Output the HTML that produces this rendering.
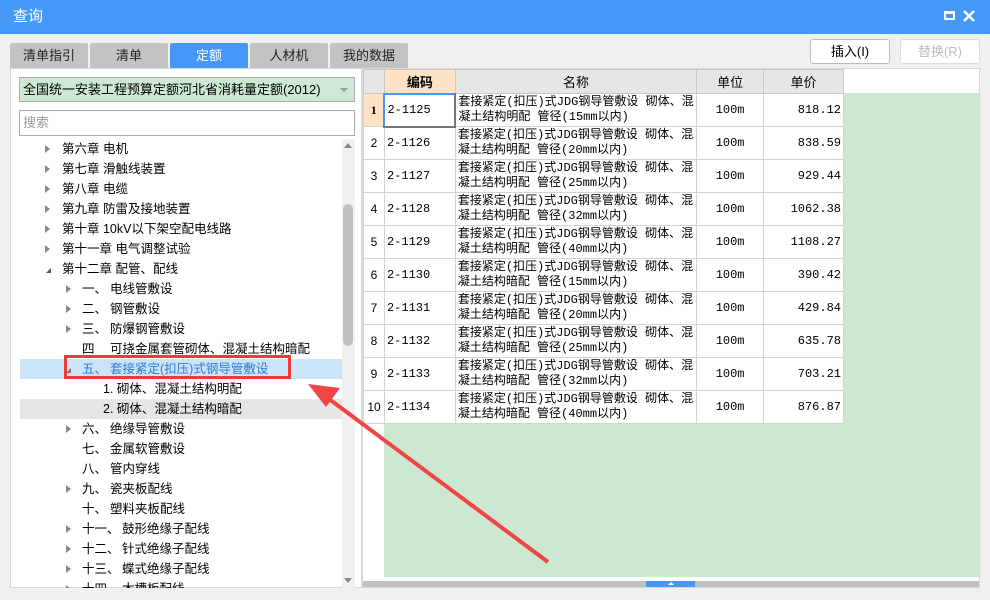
<!DOCTYPE html>
<html><head><meta charset="utf-8"><style>
*{margin:0;padding:0;box-sizing:border-box}
body{width:990px;height:600px;overflow:hidden;background:#f0f0f0;font-family:"Liberation Sans","Noto Sans CJK SC",sans-serif;font-size:12px;color:#000;position:relative}
.a{position:absolute}
.title{left:0;top:0;width:990px;height:34px;background:#4598f8;color:#fff;font-size:15px;line-height:34px;padding-left:13px}
.tab{top:43px;height:26px;background:#c3c3c3;border-radius:2px 2px 0 0;text-align:center;line-height:26px;font-size:13px;color:#222}
.btn{top:39px;height:25px;border:1px solid #bbb;border-radius:3px;background:#fff;text-align:center;line-height:23px;font-size:13px}
.tr{left:20px;width:322px;height:20px;line-height:20px;font-size:12.5px;white-space:nowrap}
.tri{position:absolute;width:0;height:0;border-top:4px solid transparent;border-bottom:4px solid transparent;border-left:5px solid #888;top:6px}
table{border-collapse:collapse;font-family:"Liberation Mono","Noto Sans CJK SC",monospace;font-size:12px}
td{border:1px solid #d4d4d4;height:33px;padding:0 2px;background:#fff;line-height:15px}
th{border:1px solid #c8c8c8;height:24px;background:#e6e6e6;font-weight:normal;font-family:"Liberation Sans","Noto Sans CJK SC",sans-serif;font-size:13px}
td.n{text-align:center;background:#fff;width:21px;font-family:"Liberation Sans",sans-serif}
td.u{text-align:center}
td.p{text-align:right}
</style></head><body>
<div class="a title">查询</div>
<div class="a" style="left:944px;top:11px;width:11px;height:9px;border:2px solid #fff;border-top-width:3px"></div>
<svg class="a" style="left:963px;top:10px" width="12" height="12"><path d="M1 1L11 11M11 1L1 11" stroke="#fff" stroke-width="2.4"/></svg>

<div class="a tab" style="left:10px;width:78px">清单指引</div>
<div class="a tab" style="left:90px;width:78px">清单</div>
<div class="a tab" style="left:170px;width:78px;background:#4598f8;color:#fff">定额</div>
<div class="a tab" style="left:250px;width:78px">人材机</div>
<div class="a tab" style="left:330px;width:78px">我的数据</div>
<div class="a btn" style="left:810px;width:80px">插入(I)</div>
<div class="a btn" style="left:900px;width:80px;color:#bbb;border-color:#ddd">替换(R)</div>

<div class="a" style="left:10px;top:68px;width:352px;height:520px;background:#fff;border:1px solid #d8d8d8"></div>
<div class="a" style="left:19px;top:77px;width:336px;height:25px;background:#cde8d3;border:1px solid #aaa;line-height:23px;padding-left:3px;font-size:13px">全国统一安装工程预算定额河北省消耗量定额(2012)<span style="position:absolute;right:6px;top:10px;border-left:4px solid transparent;border-right:4px solid transparent;border-top:4px solid #999"></span></div>
<div class="a" style="left:19px;top:110px;width:336px;height:26px;background:#fff;border:1px solid #aaa;line-height:24px;padding-left:3px;color:#999;font-size:13px">搜索</div>

<div class="a" style="left:20px;top:359px;width:322px;height:20px;background:#cce4f8"></div>
<div class="a" style="left:20px;top:399px;width:322px;height:20px;background:#e6e6e6"></div>
<div class="a" style="left:342px;top:139px;width:13px;height:449px;background:#f0f0f0"></div>
<div class="a" style="left:343px;top:204px;width:10px;height:142px;background:#c1c1c1;border-radius:5px"></div>
<div class="a" style="left:344px;top:143px;border-left:4px solid transparent;border-right:4px solid transparent;border-bottom:5px solid #888"></div>
<div class="a" style="left:344px;top:578px;border-left:4px solid transparent;border-right:4px solid transparent;border-top:5px solid #888"></div>

<div class="a" style="left:0;top:139px;width:342px;height:449px;overflow:hidden">
<div class="a tr" style="top:0"><i class="tri" style="left:25px"></i><span class="a" style="left:42px">第六章 电机</span></div>
<div class="a tr" style="top:20px"><i class="tri" style="left:25px"></i><span class="a" style="left:42px">第七章 滑触线装置</span></div>
<div class="a tr" style="top:40px"><i class="tri" style="left:25px"></i><span class="a" style="left:42px">第八章 电缆</span></div>
<div class="a tr" style="top:60px"><i class="tri" style="left:25px"></i><span class="a" style="left:42px">第九章 防雷及接地装置</span></div>
<div class="a tr" style="top:80px"><i class="tri" style="left:25px"></i><span class="a" style="left:42px">第十章 10kV以下架空配电线路</span></div>
<div class="a tr" style="top:100px"><i class="tri" style="left:25px"></i><span class="a" style="left:42px">第十一章 电气调整试验</span></div>
<div class="a tr" style="top:120px"><i class="a" style="left:26px;top:9px;border-left:5px solid transparent;border-bottom:5px solid #555"></i><span class="a" style="left:42px">第十二章 配管、配线</span></div>
<div class="a tr" style="top:140px"><i class="tri" style="left:46px"></i><span class="a" style="left:62px">一、</span><span class="a" style="left:90px">电线管敷设</span></div>
<div class="a tr" style="top:160px"><i class="tri" style="left:46px"></i><span class="a" style="left:62px">二、</span><span class="a" style="left:90px">钢管敷设</span></div>
<div class="a tr" style="top:180px"><i class="tri" style="left:46px"></i><span class="a" style="left:62px">三、</span><span class="a" style="left:90px">防爆钢管敷设</span></div>
<div class="a tr" style="top:200px"><span class="a" style="left:62px">四</span><span class="a" style="left:90px">可挠金属套管砌体、混凝土结构暗配</span></div>
<div class="a tr" style="top:220px;color:#2a7ad8"><i class="a" style="left:46px;top:9px;border-left:5px solid transparent;border-bottom:5px solid #777"></i><span class="a" style="left:62px">五、</span><span class="a" style="left:90px">套接紧定(扣压)式钢导管敷设</span></div>
<div class="a tr" style="top:240px"><span class="a" style="left:83px">1. 砌体、混凝土结构明配</span></div>
<div class="a tr" style="top:260px"><span class="a" style="left:83px">2. 砌体、混凝土结构暗配</span></div>
<div class="a tr" style="top:280px"><i class="tri" style="left:46px"></i><span class="a" style="left:62px">六、</span><span class="a" style="left:90px">绝缘导管敷设</span></div>
<div class="a tr" style="top:300px"><span class="a" style="left:62px">七、</span><span class="a" style="left:90px">金属软管敷设</span></div>
<div class="a tr" style="top:320px"><span class="a" style="left:62px">八、</span><span class="a" style="left:90px">管内穿线</span></div>
<div class="a tr" style="top:340px"><i class="tri" style="left:46px"></i><span class="a" style="left:62px">九、</span><span class="a" style="left:90px">瓷夹板配线</span></div>
<div class="a tr" style="top:360px"><span class="a" style="left:62px">十、</span><span class="a" style="left:90px">塑料夹板配线</span></div>
<div class="a tr" style="top:380px"><i class="tri" style="left:46px"></i><span class="a" style="left:62px">十一、</span><span class="a" style="left:102px">鼓形绝缘子配线</span></div>
<div class="a tr" style="top:400px"><i class="tri" style="left:46px"></i><span class="a" style="left:62px">十二、</span><span class="a" style="left:102px">针式绝缘子配线</span></div>
<div class="a tr" style="top:420px"><i class="tri" style="left:46px"></i><span class="a" style="left:62px">十三、</span><span class="a" style="left:102px">蝶式绝缘子配线</span></div>
<div class="a tr" style="top:440px"><i class="tri" style="left:46px"></i><span class="a" style="left:62px">十四、</span><span class="a" style="left:102px">木槽板配线</span></div>
</div>

<div class="a" style="left:362px;top:68px;width:618px;height:520px;background:#fff;border:1px solid #d8d8d8"></div>
<div class="a" style="left:384px;top:93px;width:595px;height:484px;background:#cde8d0"></div>
<div class="a" style="left:363px;top:581px;width:616px;height:6px;background:#c0c0c0"></div>
<div class="a" style="left:646px;top:581px;width:49px;height:6px;background:#4598f8"></div>
<div class="a" style="left:668px;top:582px;border-left:3px solid transparent;border-right:3px solid transparent;border-bottom:3px solid #fff"></div>

<table class="a" style="left:363px;top:69px;width:481px">
<tr><th style="width:21px"></th><th style="width:71px;background:#fde3c4;font-weight:bold">编码</th><th style="width:242px">名称</th><th style="width:67px">单位</th><th style="width:80px">单价</th></tr>
<tr><td class="n" style="background:#fde3c4;font-weight:bold;font-family:'Liberation Serif',serif">1</td><td style="border:2px solid #777;border-left-color:#4598f8;border-top-color:#4598f8">2-1125</td><td>套接紧定(扣压)式JDG钢导管敷设 砌体、混凝土结构明配 管径(15mm以内)</td><td class="u">100m</td><td class="p">818.12</td></tr>
<tr><td class="n">2</td><td>2-1126</td><td>套接紧定(扣压)式JDG钢导管敷设 砌体、混凝土结构明配 管径(20mm以内)</td><td class="u">100m</td><td class="p">838.59</td></tr>
<tr><td class="n">3</td><td>2-1127</td><td>套接紧定(扣压)式JDG钢导管敷设 砌体、混凝土结构明配 管径(25mm以内)</td><td class="u">100m</td><td class="p">929.44</td></tr>
<tr><td class="n">4</td><td>2-1128</td><td>套接紧定(扣压)式JDG钢导管敷设 砌体、混凝土结构明配 管径(32mm以内)</td><td class="u">100m</td><td class="p">1062.38</td></tr>
<tr><td class="n">5</td><td>2-1129</td><td>套接紧定(扣压)式JDG钢导管敷设 砌体、混凝土结构明配 管径(40mm以内)</td><td class="u">100m</td><td class="p">1108.27</td></tr>
<tr><td class="n">6</td><td>2-1130</td><td>套接紧定(扣压)式JDG钢导管敷设 砌体、混凝土结构暗配 管径(15mm以内)</td><td class="u">100m</td><td class="p">390.42</td></tr>
<tr><td class="n">7</td><td>2-1131</td><td>套接紧定(扣压)式JDG钢导管敷设 砌体、混凝土结构暗配 管径(20mm以内)</td><td class="u">100m</td><td class="p">429.84</td></tr>
<tr><td class="n">8</td><td>2-1132</td><td>套接紧定(扣压)式JDG钢导管敷设 砌体、混凝土结构暗配 管径(25mm以内)</td><td class="u">100m</td><td class="p">635.78</td></tr>
<tr><td class="n">9</td><td>2-1133</td><td>套接紧定(扣压)式JDG钢导管敷设 砌体、混凝土结构暗配 管径(32mm以内)</td><td class="u">100m</td><td class="p">703.21</td></tr>
<tr><td class="n">10</td><td>2-1134</td><td>套接紧定(扣压)式JDG钢导管敷设 砌体、混凝土结构暗配 管径(40mm以内)</td><td class="u">100m</td><td class="p">876.87</td></tr>
</table>

<div class="a" style="left:64px;top:355px;width:227px;height:24px;border:3px solid #f03a3a"></div>
<svg class="a" style="left:0;top:0" width="990" height="600"><line x1="548" y1="562" x2="325" y2="396" stroke="#f04545" stroke-width="4"/><polygon points="308,384 340,388 326,407" fill="#f04545"/></svg>
</body></html>
